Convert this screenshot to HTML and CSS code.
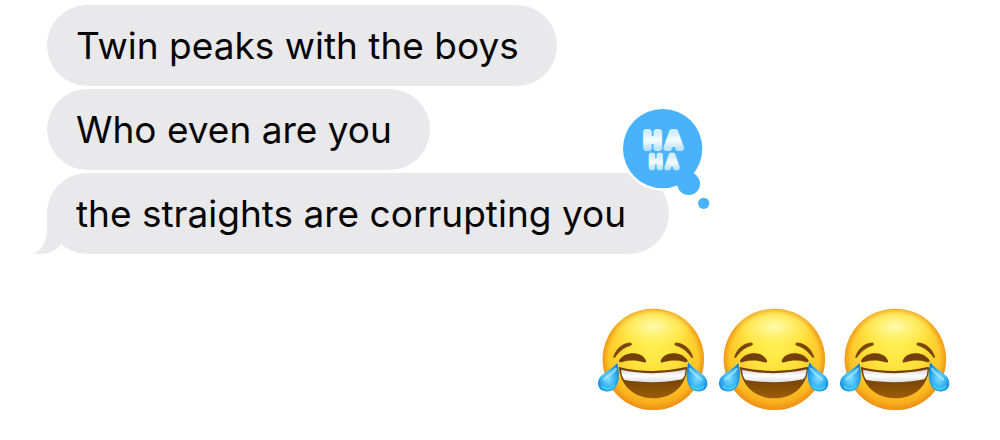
FILE: index.html
```html
<!DOCTYPE html>
<html lang="en">

<head>
    <meta charset="UTF-8">
    <meta name="viewport" content="width=device-width, initial-scale=1.0">
    <title>Messages</title>
    <link rel="stylesheet" href="styles.css">
</head>

<body>

    <!-- shared emoji drawing -->
    <svg class="defs" width="0" height="0" aria-hidden="true">
        <defs>
            <radialGradient id="face" cx="50%" cy="34%" r="68%">
                <stop offset="0" stop-color="#fff050" />
                <stop offset="0.4" stop-color="#ffe23c" />
                <stop offset="0.75" stop-color="#fcbf22" />
                <stop offset="1" stop-color="#f39a16" />
            </radialGradient>
            <radialGradient id="rim" cx="50%" cy="50%" r="50%">
                <stop offset="0.88" stop-color="#ee8f12" stop-opacity="0" />
                <stop offset="1" stop-color="#ec8a18" stop-opacity="0.75" />
            </radialGradient>
            <radialGradient id="shine" cx="50%" cy="40%" r="50%">
                <stop offset="0" stop-color="#fffcc0" stop-opacity="0.9" />
                <stop offset="1" stop-color="#fff46a" stop-opacity="0" />
            </radialGradient>
            <linearGradient id="mouth" x1="0" y1="0" x2="0" y2="1">
                <stop offset="0" stop-color="#6e3b02" />
                <stop offset="0.5" stop-color="#7e4804" />
                <stop offset="1" stop-color="#9c5e0a" />
            </linearGradient>
            <linearGradient id="teeth" x1="0" y1="0" x2="0" y2="1">
                <stop offset="0" stop-color="#d0d0da" />
                <stop offset="0.5" stop-color="#ffffff" />
                <stop offset="1" stop-color="#dedee6" />
            </linearGradient>
            <radialGradient id="tear" cx="50%" cy="55%" r="58%">
                <stop offset="0" stop-color="#7fdcff" />
                <stop offset="0.5" stop-color="#3fb8f5" />
                <stop offset="1" stop-color="#1184d8" />
            </radialGradient>
            <symbol id="joy" viewBox="0 0 363 360">
                <circle cx="190" cy="178" r="152" fill="url(#face)" />
                <circle cx="190" cy="178" r="152" fill="url(#rim)" />
                <ellipse cx="190" cy="92" rx="124" ry="64" fill="url(#shine)" />
                <g fill="#7b4503" stroke="#7b4503" stroke-width="3" stroke-linejoin="round">
                    <path d="M71 172C78 147 96 131 121 129C126 130 125 135 121 136C101 142 87 154 74 172Z" />
                    <path d="M308 172C301 147 283 131 258 129C253 130 254 135 258 136C278 142 292 154 305 172Z" />
                </g>
                <g fill="#74400a">
                    <path d="M88 180C99 165 115 159 132 160C151 161 163 170 168 182C169 188 164 188 160 187C139 180 117 180 96 186C89 189 85 184 88 180Z" />
                    <path d="M212 182C217 170 229 161 248 160C265 159 281 165 292 180C295 184 291 189 284 186C263 180 241 180 220 187C216 188 211 188 212 182Z" />
                </g>
                <path d="M87 205C86 200 90 201 95 203C158 216 222 216 284 202C290 200 292 202 291 207C287 258 247 295 190 295C133 295 93 259 87 205Z" fill="url(#mouth)" />
                <path d="M93 209C156 223 224 223 287 208C286 222 283 233 276 238C222 249 159 249 104 240C97 234 94 222 93 209Z" fill="url(#teeth)" />
                <path d="M82 189C87 210 89 233 83 250C77 268 62 277 46 274C28 271 20 255 26 239C32 222 64 210 82 189Z" fill="url(#tear)" />
                <path d="M295 187C289 210 288 233 294 250C300 268 315 277 331 274C349 271 356 255 350 239C344 222 312 210 295 187Z" fill="url(#tear)" />
                <path d="M77 207C68 220 53 228 43 238" fill="none" stroke="#b9f0ff" stroke-width="7" stroke-linecap="round" opacity="0.6" />
                <path d="M300 207C309 220 323 228 333 238" fill="none" stroke="#b9f0ff" stroke-width="7" stroke-linecap="round" opacity="0.6" />
                <path d="M37 260C48 270 63 269 73 257M340 260C329 270 314 269 304 257" fill="none" stroke="#3cd8fa" stroke-width="6" stroke-linecap="round" opacity="0.8" />
            </symbol>
        </defs>
    </svg>

    <main class="chat">
        <div class="received">
            <p class="bubble">Twin peaks with the boys</p>
            <p class="bubble">Who even are you</p>
            <div class="bubble last">
                <svg class="tail" viewBox="39 150 90 132" aria-hidden="true">
                    <path d="M81 150V207C81 243 67 269 42 280C69 286 101 280 122 255L129 150Z" fill="#e9e9eb" />
                </svg>
                the straights are corrupting you
                <svg class="reaction" viewBox="0 0 390 390">
                    <defs>
                        <linearGradient id="puffy" x1="0" y1="0" x2="0" y2="1">
                            <stop offset="0.2" stop-color="#d3eeff" />
                            <stop offset="0.5" stop-color="#f6fcff" />
                            <stop offset="0.8" stop-color="#bde4ff" />
                        </linearGradient>
                    </defs>
                    <g fill="#ffffff">
                        <circle cx="188" cy="161" r="127" />
                        <circle cx="266" cy="267" r="40" />
                    </g>
                    <g fill="#48b3fb">
                        <circle cx="188" cy="161" r="119" />
                        <circle cx="266" cy="266" r="34" />
                        <circle cx="311" cy="325" r="17" />
                    </g>
                    <g class="haha" fill="url(#puffy)" stroke="url(#puffy)">
                        <text x="157 221" y="160" font-size="66" stroke-width="18">HA</text>
                        <text x="167 216" y="220" font-size="50" stroke-width="13">HA</text>
                    </g>
                </svg>
            </div>
        </div>

        <div class="sent">
            <svg class="emoji" role="img" aria-label="face with tears of joy"><use href="#joy" /></svg>
            <svg class="emoji" role="img" aria-label="face with tears of joy"><use href="#joy" /></svg>
            <svg class="emoji" role="img" aria-label="face with tears of joy"><use href="#joy" /></svg>
        </div>
    </main>

</body>

</html>
```

FILE: styles.css
```css
body {
    margin: 0;
    background-color: #ffffff;
    color: #050505;
    font-family: Inter, 'Liberation Sans', sans-serif;
    font-size: 37px;
    line-height: 45px;
}

.defs {
    position: absolute;
}

.chat {
    display: flex;
    flex-direction: column;
    gap: 46px;
    padding: 5px 47px 20px;
}

.received {
    display: flex;
    flex-direction: column;
    align-items: flex-start;
    gap: 3px;
}

.bubble {
    margin: 0;
    padding: 18px 38px 18px 29px;
    border-radius: 41px;
    background-color: #e9e9eb;
}

.last {
    position: relative;
    padding-right: 43px;
}

.tail {
    position: absolute;
    left: -14px;
    bottom: 0;
    width: 30px;
    height: 44px;
}

/* tapback hangs over the top right corner of the bubble */
.reaction {
    position: absolute;
    top: -78px;
    right: -61px;
    width: 130px;
    height: 130px;
}

.haha {
    stroke-linejoin: round;
    font-weight: 500;
    text-anchor: middle;
}

.sent {
    display: flex;
    justify-content: flex-end;
}

.emoji {
    width: 121px;
    height: 120px;
}
```
